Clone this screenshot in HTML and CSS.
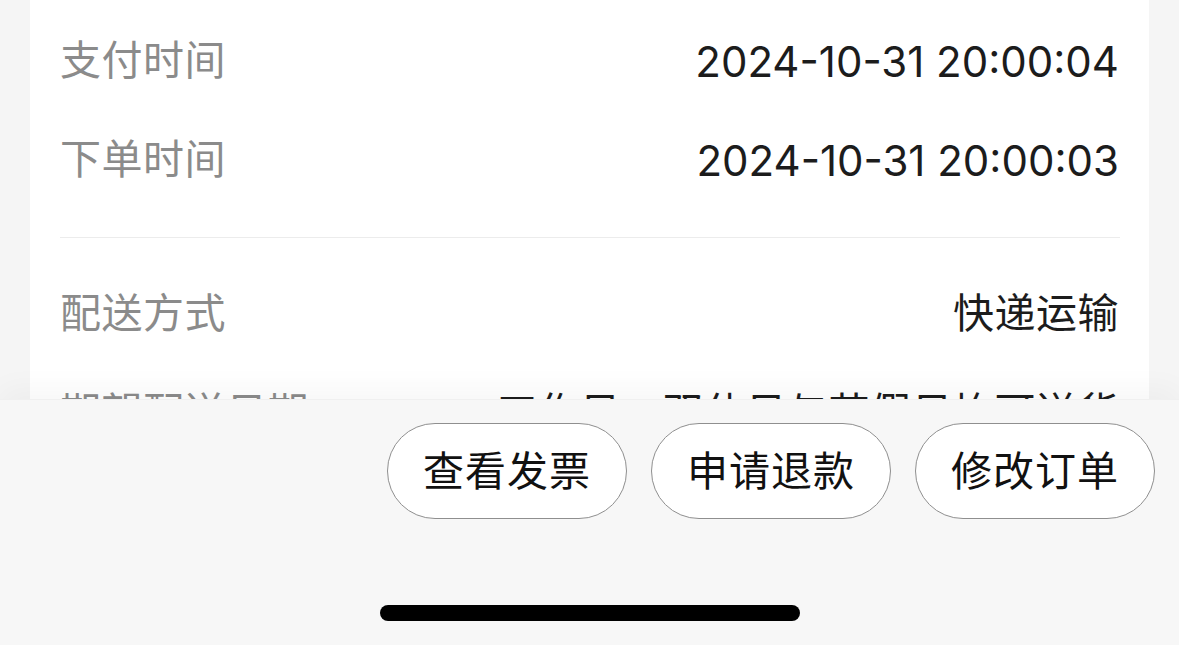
FILE: index.html
```html
<!DOCTYPE html>
<html lang="zh-CN">
<head>
<meta charset="utf-8">
<title>订单详情</title>
<link rel="stylesheet" href="styles.css">
</head>
<body>
<div class="screen">
  <div class="scroll">
    <div class="card">
      <div class="group">
        <div class="row"><span class="label">支付时间</span><span class="value num">2024-10-31 20:00:04</span></div>
        <div class="row"><span class="label">下单时间</span><span class="value num">2024-10-31 20:00:03</span></div>
      </div>
      <div class="divider"></div>
      <div class="group">
        <div class="row"><span class="label">配送方式</span><span class="value">快递运输</span></div>
        <div class="row"><span class="label">期望配送日期</span><span class="value">工作日、双休日与节假日均可送货</span></div>
      </div>
    </div>
  </div>
  <div class="bar">
    <div class="actions">
      <button class="btn">查看发票</button>
      <button class="btn">申请退款</button>
      <button class="btn">修改订单</button>
    </div>
    <div class="home-indicator"></div>
  </div>
</div>
</body>
</html>
```
FILE: styles.css
```css
* { box-sizing: border-box; }
html, body {
  margin: 0;
  padding: 0;
  background: #f5f5f5;
  font-family: "Noto Sans CJK SC", "Noto Sans", sans-serif;
}
.screen {
  width: 1179px;
  height: 645px;
  display: flex;
  flex-direction: column;
  overflow: hidden;
}
.scroll {
  height: 399px;
  overflow: hidden;
  flex: none;
}
.card {
  margin: 0 30px;
  background: #ffffff;
  padding: 12px 30px 0 30px;
}
.group { padding-bottom: 27px; }
.group + .divider + .group { padding-top: 27px; padding-bottom: 0; }
.row {
  height: 99px;
  display: flex;
  align-items: center;
  justify-content: space-between;
  font-size: 41px;
  padding-bottom: 9px;
}
.label { color: #8b8b8b; letter-spacing: 0.5px; }
.value { color: #1c1c1c; letter-spacing: 0.5px; }
.num {
  font-family: "Inter", "Noto Sans CJK SC", sans-serif;
  font-size: 42px;
  letter-spacing: 0;
  padding-top: 9px;
}
.divider {
  height: 1px;
  background: #ececec;
  margin-right: -1px;
}
.bar {
  flex: 1;
  background: #f7f7f7;
  position: relative;
  z-index: 1;
  box-shadow: 0 -10px 28px rgba(0, 0, 0, 0.035);
  display: flex;
  flex-direction: column;
  align-items: center;
  border-top: 1px solid #f0f0f0;
}
.actions {
  align-self: stretch;
  display: flex;
  justify-content: flex-end;
  gap: 24px;
  padding: 23px 24px 0 0;
}
.btn {
  width: 240px;
  height: 96px;
  border-radius: 48px;
  border: 1.5px solid #8f8f8f;
  background: #ffffff;
  color: #111111;
  font-family: "Noto Sans CJK SC", sans-serif;
  font-size: 41px;
  font-weight: 400;
  letter-spacing: 1px;
  padding: 0 0 6px 0;
}
.home-indicator {
  margin-top: 86px;
  width: 420px;
  height: 16px;
  border-radius: 8px;
  background: #000000;
}
```
